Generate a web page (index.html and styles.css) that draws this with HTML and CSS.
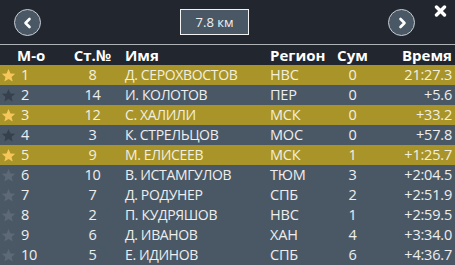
FILE: index.html
```html
<!DOCTYPE html>
<html>
<head>
<meta charset="utf-8">
<link rel="stylesheet" href="styles.css">
</head>
<body>
<div class="panel">
  <div class="topbar">
    <button class="nav">
      <svg width="12" height="12" viewBox="0 0 12 12"><path d="M7.5 2 L3.5 6 L7.5 10" fill="none" stroke="#fff" stroke-width="2.6" stroke-linecap="round" stroke-linejoin="round"/></svg>
    </button>
    <div class="dist">7.8 км</div>
    <button class="nav">
      <svg width="12" height="12" viewBox="0 0 12 12"><path d="M4.5 2 L8.5 6 L4.5 10" fill="none" stroke="#fff" stroke-width="2.6" stroke-linecap="round" stroke-linejoin="round"/></svg>
    </button>
    <div class="close">
      <svg width="13" height="12" viewBox="0 0 13 12"><path d="M2.5 2 L10.5 10 M10.5 2 L2.5 10" stroke="#fff" stroke-width="3.4" stroke-linecap="round"/></svg>
    </div>
  </div>
  <div class="row head">
    <div class="c-place">М-о</div>
    <div class="c-bib">Ст.№</div>
    <div class="c-name">Имя</div>
    <div class="c-reg">Регион</div>
    <div class="c-sum">Сум</div>
    <div class="c-time">Время</div>
  </div>
  <div class="row gold">
    <div class="c-place"><svg class="star fav" viewBox="0 0 24 24"><path d="M12 1.5l3.1 7.1 7.6.6-5.8 5 1.8 7.5L12 17.7l-6.7 4 1.8-7.5-5.8-5 7.6-.6z"/></svg>1</div>
    <div class="c-bib">8</div><div class="c-name">Д. СЕРОХВОСТОВ</div><div class="c-reg">НВС</div><div class="c-sum">0</div><div class="c-time">21:27.3</div>
  </div>
  <div class="row">
    <div class="c-place"><svg class="star dark" viewBox="0 0 24 24"><path d="M12 1.5l3.1 7.1 7.6.6-5.8 5 1.8 7.5L12 17.7l-6.7 4 1.8-7.5-5.8-5 7.6-.6z"/></svg>2</div>
    <div class="c-bib">14</div><div class="c-name">И. КОЛОТОВ</div><div class="c-reg">ПЕР</div><div class="c-sum">0</div><div class="c-time">+5.6</div>
  </div>
  <div class="row gold">
    <div class="c-place"><svg class="star fav" viewBox="0 0 24 24"><path d="M12 1.5l3.1 7.1 7.6.6-5.8 5 1.8 7.5L12 17.7l-6.7 4 1.8-7.5-5.8-5 7.6-.6z"/></svg>3</div>
    <div class="c-bib">12</div><div class="c-name">С. ХАЛИЛИ</div><div class="c-reg">МСК</div><div class="c-sum">0</div><div class="c-time">+33.2</div>
  </div>
  <div class="row">
    <div class="c-place"><svg class="star dark" viewBox="0 0 24 24"><path d="M12 1.5l3.1 7.1 7.6.6-5.8 5 1.8 7.5L12 17.7l-6.7 4 1.8-7.5-5.8-5 7.6-.6z"/></svg>4</div>
    <div class="c-bib">3</div><div class="c-name">К. СТРЕЛЬЦОВ</div><div class="c-reg">МОС</div><div class="c-sum">0</div><div class="c-time">+57.8</div>
  </div>
  <div class="row gold">
    <div class="c-place"><svg class="star fav" viewBox="0 0 24 24"><path d="M12 1.5l3.1 7.1 7.6.6-5.8 5 1.8 7.5L12 17.7l-6.7 4 1.8-7.5-5.8-5 7.6-.6z"/></svg>5</div>
    <div class="c-bib">9</div><div class="c-name">М. ЕЛИСЕЕВ</div><div class="c-reg">МСК</div><div class="c-sum">1</div><div class="c-time">+1:25.7</div>
  </div>
  <div class="row">
    <div class="c-place"><svg class="star light" viewBox="0 0 24 24"><path d="M12 1.5l3.1 7.1 7.6.6-5.8 5 1.8 7.5L12 17.7l-6.7 4 1.8-7.5-5.8-5 7.6-.6z"/></svg>6</div>
    <div class="c-bib">10</div><div class="c-name">В. ИСТАМГУЛОВ</div><div class="c-reg">ТЮМ</div><div class="c-sum">3</div><div class="c-time">+2:04.5</div>
  </div>
  <div class="row">
    <div class="c-place"><svg class="star light" viewBox="0 0 24 24"><path d="M12 1.5l3.1 7.1 7.6.6-5.8 5 1.8 7.5L12 17.7l-6.7 4 1.8-7.5-5.8-5 7.6-.6z"/></svg>7</div>
    <div class="c-bib">7</div><div class="c-name">Д. РОДУНЕР</div><div class="c-reg">СПБ</div><div class="c-sum">2</div><div class="c-time">+2:51.9</div>
  </div>
  <div class="row">
    <div class="c-place"><svg class="star light" viewBox="0 0 24 24"><path d="M12 1.5l3.1 7.1 7.6.6-5.8 5 1.8 7.5L12 17.7l-6.7 4 1.8-7.5-5.8-5 7.6-.6z"/></svg>8</div>
    <div class="c-bib">2</div><div class="c-name">П. КУДРЯШОВ</div><div class="c-reg">НВС</div><div class="c-sum">1</div><div class="c-time">+2:59.5</div>
  </div>
  <div class="row">
    <div class="c-place"><svg class="star light" viewBox="0 0 24 24"><path d="M12 1.5l3.1 7.1 7.6.6-5.8 5 1.8 7.5L12 17.7l-6.7 4 1.8-7.5-5.8-5 7.6-.6z"/></svg>9</div>
    <div class="c-bib">6</div><div class="c-name">Д. ИВАНОВ</div><div class="c-reg">ХАН</div><div class="c-sum">4</div><div class="c-time">+3:34.0</div>
  </div>
  <div class="row">
    <div class="c-place"><svg class="star light" viewBox="0 0 24 24"><path d="M12 1.5l3.1 7.1 7.6.6-5.8 5 1.8 7.5L12 17.7l-6.7 4 1.8-7.5-5.8-5 7.6-.6z"/></svg>10</div>
    <div class="c-bib">5</div><div class="c-name">Е. ИДИНОВ</div><div class="c-reg">СПБ</div><div class="c-sum">6</div><div class="c-time">+4:36.7</div>
  </div>
</div>
</body>
</html>
```
FILE: styles.css
```css
html, body {
  margin: 0;
  padding: 0;
  background: #22262e;
}
.panel {
  width: 455px;
  height: 265px;
  overflow: hidden;
  background: #22262e;
  font-family: "Open Sans", "Noto Sans", sans-serif;
  color: #eeeeee;
}
.topbar {
  height: 44px;
  border-bottom: 1px solid #aeb2b7;
  display: flex;
  align-items: flex-start;
  padding-left: 14px;
  box-sizing: content-box;
}
.nav {
  width: 27px;
  height: 27px;
  margin-top: 9px;
  border-radius: 50%;
  background: #4a5866;
  border: 1.5px solid #c9cdd1;
  padding: 0;
  display: flex;
  align-items: center;
  justify-content: center;
  box-sizing: border-box;
}
.nav + .dist {
  margin-left: 139px;
}
.dist {
  width: 69px;
  height: 26px;
  margin-top: 9px;
  margin-right: 139px;
  box-sizing: border-box;
  border: 1.5px solid #f2f2f2;
  background: #4a5866;
  display: flex;
  align-items: center;
  justify-content: center;
  font-size: 13px;
  color: #f0f0f0;
}
.close {
  margin-left: 19px;
  margin-top: 5px;
  line-height: 0;
}
.row {
  display: grid;
  grid-template-columns: 70px 45px 155px 60px 45px 1fr;
  height: 20px;
  align-items: center;
  font-size: 14.5px;
  letter-spacing: -0.2px;
  line-height: 20px;
  background: #4a5866;
  padding-right: 3px;
  white-space: nowrap;
}
.row .c-name {
  font-size: 14px;
  letter-spacing: -0.35px;
}
.row.head {
  background: #22262e;
  font-weight: 700;
  color: #ffffff;
  font-size: 15px;
  letter-spacing: 0;
}
.row.head .c-name {
  font-size: 15px;
  letter-spacing: 0;
}
.row.gold {
  background: #a99429;
  color: #f3efdf;
}
.c-place {
  display: flex;
  align-items: center;
  padding-left: 21px;
}
.head .c-place {
  padding-left: 17px;
}
.star {
  width: 15px;
  height: 15px;
  margin-left: -20px;
  margin-right: 5px;
}
.star.fav { fill: #f6c65a; }
.star.dark { fill: #36414c; }
.star.light { fill: #5d6976; }
.c-bib { text-align: center; }
.c-name { padding-left: 10px; }
.c-reg { text-align: left; }
.c-sum { text-align: center; }
.c-time { text-align: right; }
```
